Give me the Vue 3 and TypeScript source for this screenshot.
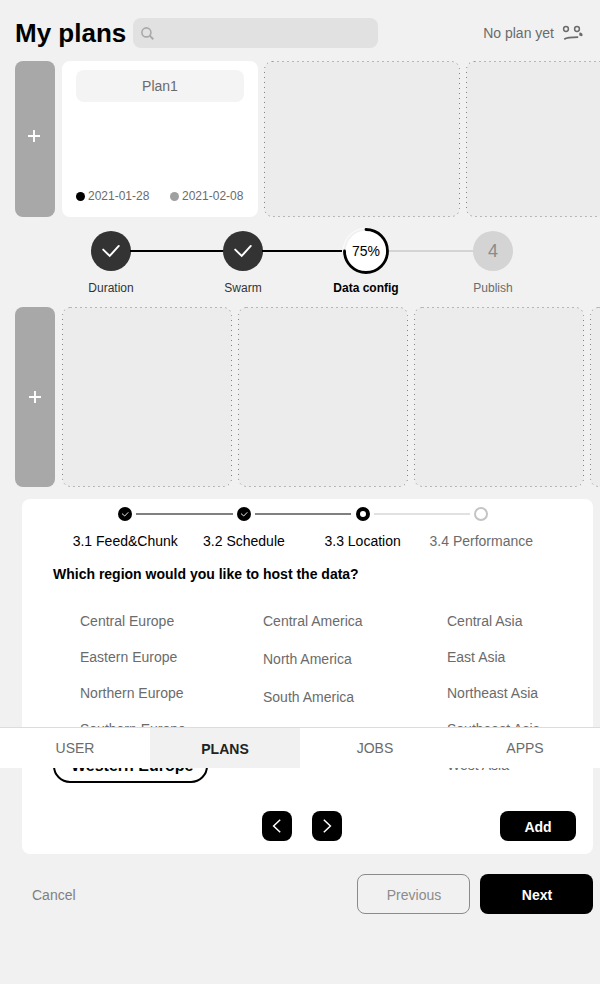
<script setup lang="ts">
interface Region {
  name: string
  selected?: boolean
}

const wideSlots: number[] = [1, 2]
const narrowSlots: number[] = [1, 2, 3, 4]

const steps = [
  { label: '3.1 Feed&Chunk', state: 'done' },
  { label: '3.2 Schedule', state: 'done' },
  { label: '3.3 Location', state: 'current' },
  { label: '3.4 Performance', state: 'todo' },
]

const regionColumns: { id: string; regions: Region[] }[] = [
  {
    id: 'europe',
    regions: [
      { name: 'Central Europe' },
      { name: 'Eastern Europe' },
      { name: 'Northern Europe' },
      { name: 'Southern Europe' },
      { name: 'Western Europe', selected: true },
    ],
  },
  {
    id: 'america',
    regions: [{ name: 'Central America' }, { name: 'North America' }, { name: 'South America' }],
  },
  {
    id: 'asia',
    regions: [
      { name: 'Central Asia' },
      { name: 'East Asia' },
      { name: 'Northeast Asia' },
      { name: 'Southeast Asia' },
      { name: 'West Asia' },
    ],
  },
]

const tabs = ['USER', 'PLANS', 'JOBS', 'APPS']
const activeTab = 'PLANS'
</script>

<template>
  <div class="page">
    <header class="header">
      <h1>My plans</h1>
      <div class="search">
        <svg width="13" height="13" viewBox="0 0 13 13" fill="none" stroke="#a9a9a9" stroke-width="1.6">
          <circle cx="5.4" cy="5.4" r="4.5" />
          <path d="M8.6 8.6L12.3 12.3" stroke-width="2" />
        </svg>
      </div>
      <div class="empty-note">
        <span>No plan yet</span>
        <svg width="21" height="16" viewBox="0 0 21 16" fill="none" stroke="#6b6b6b" stroke-width="1.5">
          <circle cx="4" cy="4" r="2.4" />
          <circle cx="15" cy="4" r="2.4" />
          <path d="M2.2 14.2C5 12.2 9 12.1 16.2 12.1" stroke-width="1.7" />
          <path d="M17.8 7.2C19.2 7.6 21 8.6 20.6 10.2C20.1 11.7 17.7 11.6 17.3 10.1C17 9 17.5 8.1 17.8 7.2Z" fill="#6b6b6b" stroke="none" />
        </svg>
      </div>
    </header>

    <section class="row row-plans">
      <button class="add-tile"><svg width="12" height="12" viewBox="0 0 12 12"><path d="M6 0V12M0 6H12" stroke="#fff" stroke-width="1.9" /></svg></button>
      <article class="plan">
        <div class="plan-name">Plan1</div>
        <div class="plan-dates">
          <span class="date"><i class="dot"></i>2021-01-28</span>
          <span class="date"><i class="dot dot-end"></i>2021-02-08</span>
        </div>
      </article>
      <svg v-for="slot in wideSlots" :key="slot" class="slot" width="196" height="156">
        <rect x="0.5" y="0.5" width="195" height="155" rx="8" />
      </svg>
    </section>

    <section class="progress">
      <div class="stage">
        <div class="badge"><svg width="18" height="14" viewBox="0 0 18 14"><path d="M1.2 5.6L7.7 12L16.8 1.9" /></svg></div>
        <span>Duration</span>
      </div>
      <div class="link link-first"></div>
      <div class="stage">
        <div class="badge"><svg width="18" height="14" viewBox="0 0 18 14"><path d="M1.2 5.6L7.7 12L16.8 1.9" /></svg></div>
        <span>Swarm</span>
      </div>
      <div class="link link-second"></div>
      <div class="stage stage-active">
        <div class="ring">
          <svg width="46" height="46" viewBox="0 0 46 46">
            <circle cx="23" cy="23" r="22" fill="#fff" />
            <circle cx="23" cy="23" r="21.5" fill="none" stroke="#f1f1f1" stroke-width="2.6" />
            <circle cx="23" cy="23" r="22.8" fill="none" stroke="#fff" stroke-width="0.8" />
            <path d="M23 1.5A21.5 21.5 0 1 1 1.5 23" fill="none" stroke="#000" stroke-width="2.8" stroke-linecap="round" />
            <text x="23" y="28" text-anchor="middle">75%</text>
          </svg>
        </div>
        <span>Data config</span>
      </div>
      <div class="link link-third"></div>
      <div class="stage stage-next">
        <div class="badge">4</div>
        <span>Publish</span>
      </div>
    </section>

    <section class="row row-swarm">
      <button class="add-tile"><svg width="12" height="12" viewBox="0 0 12 12"><path d="M6 0V12M0 6H12" stroke="#fff" stroke-width="1.9" /></svg></button>
      <svg v-for="slot in narrowSlots" :key="slot" class="slot" width="170" height="180">
        <rect x="0.5" y="0.5" width="169" height="179" rx="8" />
      </svg>
    </section>

    <section class="panel">
      <ol class="steps">
        <li v-for="step in steps" :key="step.label" :class="step.state">
          <div class="track">
            <i class="line line-before"></i>
            <svg width="14" height="14" viewBox="0 0 14 14">
              <template v-if="step.state === 'done'">
                <circle cx="7" cy="7" r="7" />
                <path d="M4 6.6L6.7 9L10.3 5.3" fill="none" stroke="#fff" stroke-width="0.9" />
              </template>
              <circle v-else-if="step.state === 'current'" cx="7" cy="7" r="5" fill="#fff" stroke="#000" stroke-width="4" />
              <circle v-else cx="7" cy="7" r="6" fill="#fff" stroke="#c4c4c4" stroke-width="2" />
            </svg>
            <i class="line line-after"></i>
          </div>
          <span>{{ step.label }}</span>
        </li>
      </ol>
      <h2>Which region would you like to host the data?</h2>
      <div class="regions">
        <ul v-for="column in regionColumns" :key="column.id" :class="column.id">
          <li v-for="region in column.regions" :key="region.name" :class="{ selected: region.selected }">{{ region.name }}</li>
        </ul>
      </div>
      <div class="panel-actions">
        <button class="square"><svg width="10" height="16" viewBox="0 0 10 16"><path d="M8.2 1.7L1.6 8L8.2 14.3" /></svg></button>
        <button class="square"><svg width="10" height="16" viewBox="0 0 10 16"><path d="M1.8 1.7L8.4 8L1.8 14.3" /></svg></button>
        <button class="add">Add</button>
      </div>
    </section>

    <footer class="footer">
      <button class="cancel">Cancel</button>
      <button class="previous">Previous</button>
      <button class="next">Next</button>
    </footer>

    <nav class="tabs">
      <a v-for="tab in tabs" :key="tab" :class="{ active: tab === activeTab }">{{ tab }}</a>
    </nav>
  </div>
</template>

<style>
body {
  background: #f1f1f1;
}
</style>

<style scoped>
.page {
  position: relative;
  box-sizing: border-box;
  width: 600px;
  height: 984px;
  overflow: hidden;
  background: #f1f1f1;
  color: #6b6b6b;
  font: 14px/16px "Liberation Sans", Arial, sans-serif;
}
.page * {
  box-sizing: border-box;
}
svg {
  display: block;
  flex: none;
}
button {
  display: flex;
  align-items: center;
  justify-content: center;
  flex: none;
  padding: 0;
  border: 0;
  background: none;
  color: inherit;
  font: inherit;
}
.header {
  display: flex;
  align-items: center;
  height: 61px;
  padding: 5px 17px 0 15px;
}
h1 {
  width: 118px;
  margin: 0;
  color: #000;
  font-size: 26px;
  line-height: 30px;
  white-space: nowrap;
}
.search {
  display: flex;
  align-items: center;
  width: 245px;
  height: 30px;
  padding: 1px 0 0 8px;
  border-radius: 8px;
  background: #e1e1e1;
}
.empty-note {
  display: flex;
  align-items: center;
  gap: 8px;
  margin-left: auto;
}
.row {
  display: flex;
  gap: 6px;
  padding-left: 15px;
}
.row-plans {
  height: 156px;
}
.row-swarm {
  height: 180px;
}
.add-tile {
  width: 40px;
  height: 100%;
  margin-right: 1px;
  border-radius: 8px;
  background: #a8a8a8;
}
.row-plans .add-tile {
  padding: 0 2px 7px 0;
}
.slot rect {
  fill: #ececec;
  stroke: #808080;
  stroke-dasharray: 1 4;
}
.plan {
  display: flex;
  flex-direction: column;
  justify-content: space-between;
  flex: none;
  width: 196px;
  padding: 9px 14px 13px;
  border-radius: 8px;
  background: #fff;
}
.plan-name {
  height: 32px;
  border-radius: 8px;
  background: #f4f4f4;
  line-height: 32px;
  text-align: center;
}
.plan-dates {
  display: flex;
  justify-content: space-between;
  padding-right: 0.6px;
  font-size: 12px;
}
.date {
  display: flex;
  align-items: center;
  gap: 3px;
}
.dot {
  width: 9px;
  height: 9px;
  border-radius: 50%;
  background: #000;
}
.dot-end {
  background: #a0a0a0;
}
.progress {
  display: flex;
  height: 90px;
  padding: 11px 0 0 88px;
}
.stage {
  display: flex;
  flex-direction: column;
  align-items: center;
  flex: none;
  width: 46px;
  color: #333;
  font-size: 12px;
  white-space: nowrap;
}
.stage span {
  margin-top: 6px;
}
.badge {
  display: flex;
  align-items: center;
  justify-content: center;
  width: 40px;
  height: 40px;
  margin: 3px 0;
  border-radius: 50%;
  background: #333;
}
.badge path {
  fill: none;
  stroke: #fff;
  stroke-width: 1.9;
  stroke-linecap: round;
}
.ring {
  height: 46px;
}
.ring svg {
  overflow: visible;
}
.stage-active {
  color: #000;
  font-weight: bold;
}
.ring text {
  fill: #000;
  font-size: 14px;
  font-weight: normal;
}
.stage-next {
  color: #6b6b6b;
}
.stage-next .badge {
  background: #d4d4d4;
  color: #8b8b8b;
  font-size: 18px;
}
.link {
  flex: none;
  height: 2px;
  margin: 22px -4px 0;
  background: #000;
}
.link-first {
  width: 94px;
}
.link-second {
  width: 80px;
  margin-right: 1px;
}
.link-third {
  width: 85px;
  margin-left: 0;
  background: #d4d4d4;
}
.panel {
  width: 571px;
  height: 355px;
  margin: 12px 0 0 22px;
  padding-top: 8px;
  border-radius: 8px;
  background: #fff;
}
.steps {
  display: flex;
  width: 476px;
  margin: 0 0 0 43.9px;
  padding: 0;
  list-style: none;
  color: #000;
  text-align: center;
}
.steps li {
  flex: none;
  width: 118.7px;
}
.track {
  display: flex;
  align-items: center;
  gap: 4.2px;
  height: 14px;
  margin-bottom: 12px;
}
.line {
  flex: 1;
  height: 2px;
  background: #808080;
}
.steps li:first-child .line-before,
.steps li:last-child .line-after {
  visibility: hidden;
}
.current .line-after,
.todo .line {
  background: #e1e1e1;
}
.todo {
  color: #6b6b6b;
}
h2 {
  margin: 17px 0 0 31px;
  color: #000;
  font-size: 14px;
  line-height: 16px;
}
.regions {
  display: flex;
  height: 190px;
  margin: 21px 0 0 31px;
}
.regions ul {
  flex: none;
  width: 184px;
  margin: 0;
  padding: 0;
  list-style: none;
}
.regions li {
  height: 36px;
  padding-left: 27px;
  line-height: 36px;
}
.regions .europe {
  width: 183px;
}
.regions .america {
  margin-top: -1px;
}
.regions .america li {
  height: 38px;
  line-height: 38px;
}
.regions .selected {
  width: 155px;
  height: 34px;
  padding-left: 16px;
  margin-top: 2px;
  border: 2px solid #000;
  border-radius: 17px;
  color: #000;
  font-size: 16px;
  font-weight: bold;
  line-height: 30px;
}
.panel-actions {
  display: flex;
  gap: 20px;
  margin-top: 18px;
  padding: 0 17px 0 240px;
}
.square {
  width: 30px;
  height: 30px;
  border-radius: 8px;
  background: #000;
}
.square path {
  fill: none;
  stroke: #fff;
  stroke-width: 1.5;
}
.add {
  width: 76px;
  height: 30px;
  margin-left: auto;
  padding-top: 2px;
  border-radius: 8px;
  background: #000;
  color: #fff;
  font-weight: bold;
}
.footer {
  display: flex;
  height: 40px;
  margin-top: 20px;
  padding: 0 7px 0 32px;
}
.footer button {
  height: 40px;
  padding: 2px 0 0 1px;
  border-radius: 8px;
}
.footer .cancel {
  padding-left: 0;
  color: #808080;
}
.footer .previous {
  width: 113px;
  margin-left: auto;
  border: 1px solid #8b8b8b;
  color: #8b8b8b;
}
.footer .next {
  width: 113px;
  margin-left: 10px;
  background: #000;
  color: #fff;
  font-weight: bold;
}
.tabs {
  position: absolute;
  top: 727px;
  left: 0;
  display: flex;
  width: 600px;
  height: 41px;
  border-top: 1px solid #dcdcdc;
  background: #fff;
}
.tabs a {
  width: 150px;
  line-height: 40px;
  text-align: center;
}
.tabs .active {
  background: #f1f1f1;
  color: #222;
  font-weight: bold;
  line-height: 42px;
}
</style>
